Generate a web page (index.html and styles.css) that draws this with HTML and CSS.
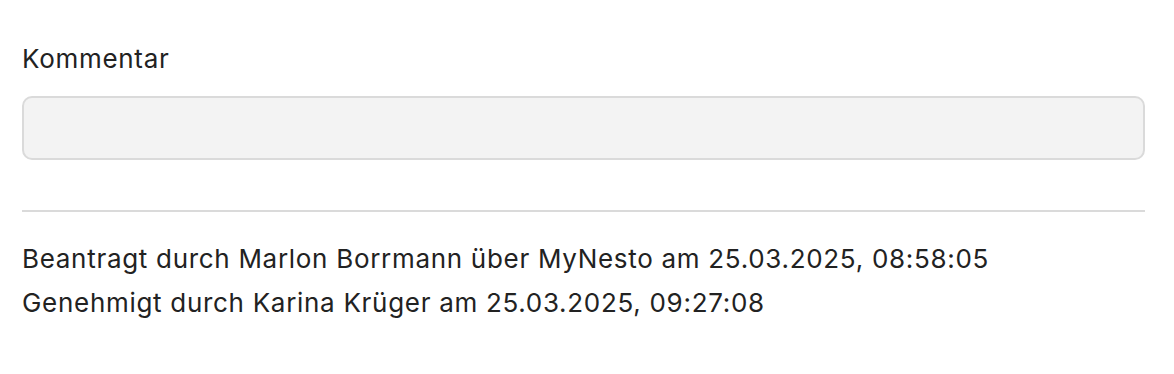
FILE: index.html
```html
<!DOCTYPE html>
<html lang="de">
<head>
<meta charset="utf-8">
<link rel="stylesheet" href="styles.css">
</head>
<body>
<div class="page">
  <label class="label">Kommentar</label>
  <div class="input"></div>
  <hr class="divider">
  <div class="meta">
    <p>Beantragt durch Marlon Borrmann über MyNesto am 25.03.2025, 08:58:05</p>
    <p>Genehmigt durch Karina Krüger am 25.03.2025, 09:27:08</p>
  </div>
</div>
</body>
</html>
```
FILE: styles.css
```css
html, body { margin: 0; padding: 0; background: #fff; }
body { font-family: Inter, "Noto Sans", sans-serif; color: #222; }
.page { width: 1123px; padding: 44px 0 0 22px; display: flex; flex-direction: column; }
.label { font-size: 26px; letter-spacing: 0.7px; line-height: 30px; display: block; }
.input { margin-top: 22px; height: 60px; background: #f3f3f3; border: 2px solid #dadada; border-radius: 10px; }
.divider { margin: 50px 0 0; border: 0; border-top: 2px solid #dadada; }
.meta { margin-top: 25px; font-size: 26px; letter-spacing: 0.7px; line-height: 44px; }
.meta p { margin: 0; }
```
